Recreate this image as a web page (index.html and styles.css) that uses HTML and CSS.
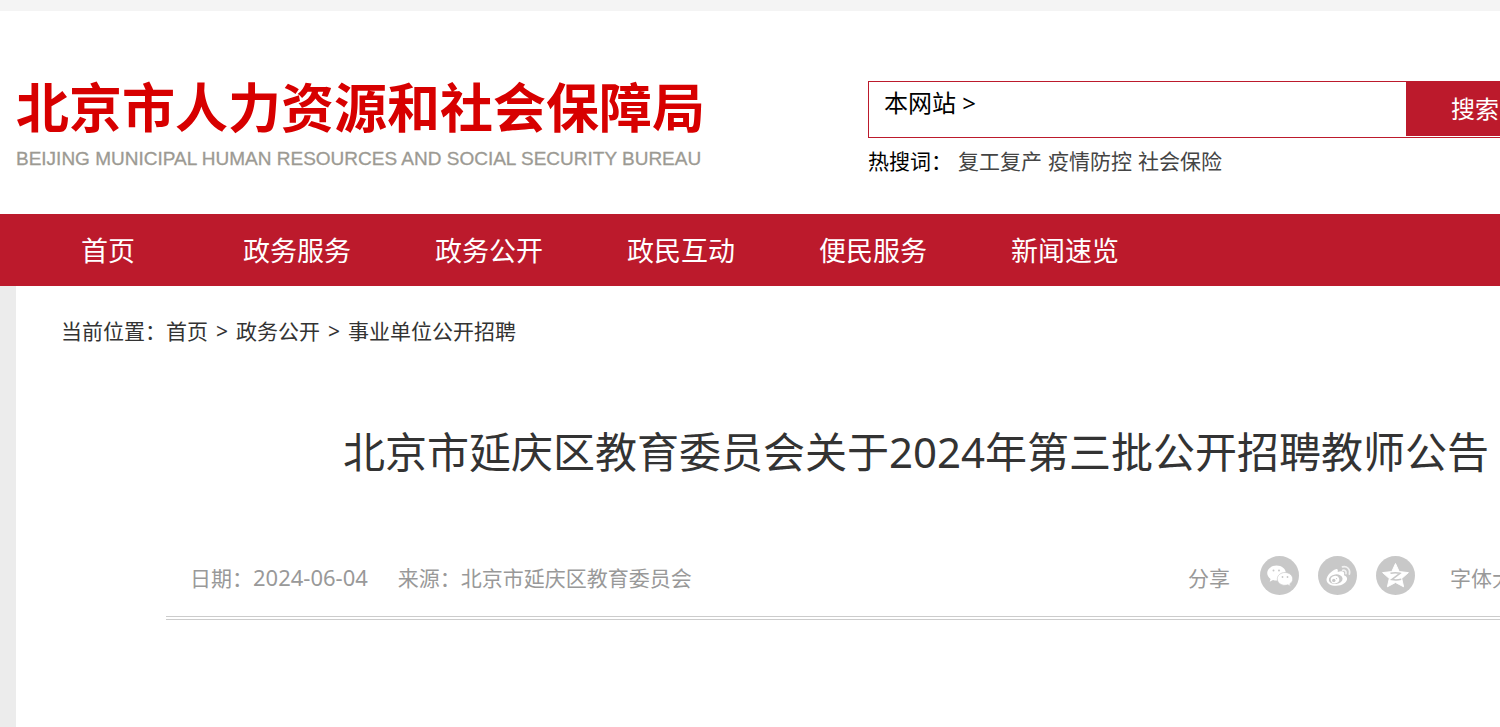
FILE: index.html
```html
<!DOCTYPE html>
<html lang="zh-CN">
<head>
<meta charset="utf-8">
<title>北京市延庆区教育委员会关于2024年第三批公开招聘教师公告</title>
<link rel="stylesheet" href="styles.css">
</head>
<body>
<div class="topbar"></div>
<header class="header">
  <div class="wrap header-row">
    <div class="logo">
      <div class="logo-cn">北京市人力资源和社会保障局</div>
      <div class="logo-en">BEIJING MUNICIPAL HUMAN RESOURCES AND SOCIAL SECURITY BUREAU</div>
    </div>
    <div class="search">
      <form class="search-form">
        <label class="search-scope" for="q">本网站 &gt;</label>
        <input class="search-input" id="q" type="text">
        <button class="search-button" type="button">搜索</button>
      </form>
      <div class="hot">
        <span class="hot-label">热搜词：</span>
        <a href="#">复工复产</a>
        <a href="#">疫情防控</a>
        <a href="#">社会保险</a>
      </div>
    </div>
  </div>
</header>
<nav class="nav">
  <div class="wrap nav-row">
    <a class="nav-home" href="#">首页</a>
    <a href="#">政务服务</a>
    <a href="#">政务公开</a>
    <a href="#">政民互动</a>
    <a href="#">便民服务</a>
    <a href="#">新闻速览</a>
  </div>
</nav>
<main class="wrap main">
  <div class="crumbs">
    <span>当前位置：</span><a href="#">首页</a><span class="sep">&gt;</span><a href="#">政务公开</a><span class="sep">&gt;</span><a href="#">事业单位公开招聘</a>
  </div>
  <article class="article">
    <h1 class="title">北京市延庆区教育委员会关于2024年第三批公开招聘教师公告</h1>
    <div class="meta">
      <span class="date">日期：<time class="date-value">2024-06-04</time></span>
      <span class="source">来源：北京市延庆区教育委员会</span>
      <div class="share">
        <span class="share-label">分享</span>
        <a class="share-link" href="#" aria-label="微信">
          <svg viewBox="0 0 39 39"><circle cx="19.500" cy="19.500" r="19.500" fill="#c8c8c8"/><path fill="#fff" d="M16.500 9.500c-5.300 0-9.300 3.300-9.300 7.500 0 2.400 1.300 4.500 3.400 5.900l-.9 2.800 3.300-1.700c1.100.4 2.300.6 3.500.6 5.200 0 9.300-3.400 9.300-7.600s-4.100-7.500-9.300-7.500z"/><path fill="#fff" stroke="#c8c8c8" stroke-width=".7" d="M25 16.500c-4.300 0-7.700 2.900-7.700 6.400s3.400 6.400 7.700 6.400c1 0 2-.2 2.900-.5l2.700 1.500-.8-2.500c1.800-1.200 2.900-2.900 2.900-4.900 0-3.500-3.400-6.400-7.700-6.400z"/><g fill="#c8c8c8"><circle cx="13.500" cy="14.500" r="1"/><circle cx="19" cy="14.500" r="1"/><circle cx="22.500" cy="21" r=".9"/><circle cx="27.500" cy="21" r=".9"/></g></svg>
        </a>
        <a class="share-link" href="#" aria-label="微博">
          <svg viewBox="0 0 39 39"><circle cx="19.500" cy="19.500" r="19.500" fill="#c8c8c8"/><path fill="#fff" d="M17.800 13.200c-3.600 1-9.300 6.300-9.300 10.500 0 3.700 4.300 6.100 9.600 6.100 6.300 0 11-3.600 11-7 0-2-1.500-3.100-3.200-3.600.5-1.400.4-2.600-.4-3.300-1.200-1.200-3.600-.8-5.800.1.500-1.900-.1-3.300-1.900-2.800z"/><ellipse cx="17.700" cy="23.200" rx="6.900" ry="4.800" fill="#c8c8c8" transform="rotate(-8 17.700 23.200)"/><ellipse cx="17" cy="23.600" rx="4.300" ry="3.700" fill="#fff" transform="rotate(-15 17 23.600)"/><circle cx="15.800" cy="24.400" r="1.700" fill="#c8c8c8"/><circle cx="18.500" cy="22.600" r=".7" fill="#c8c8c8"/><path d="M24.500 10.800c4.600-1.100 8.100 2.500 6.900 7.300M24.700 14.300c2.300-.5 3.800 1 3.300 3.300" fill="none" stroke="#fff" stroke-opacity=".75" stroke-width="1.700" stroke-linecap="round"/></svg>
        </a>
        <a class="share-link" href="#" aria-label="QQ空间">
          <svg viewBox="0 0 39 39"><circle cx="19.500" cy="19.500" r="19.500" fill="#c8c8c8"/><path fill="#fff" stroke="#fff" stroke-linejoin="round" d="M19.500 7.500l3.700 8.100 9.200 1-6.700 5.900 1.900 8.300-8.100-4.300-8.100 4.300 1.900-8.300-6.700-5.900 9.200-1z"/><path d="M14.500 17.300c3.300-.7 6.500-.7 9.500 0l-8.300 6.300c3.300.6 6.500.5 9.500-.3" fill="none" stroke="#c8c8c8" stroke-width="1.500"/></svg>
        </a>
      </div>
      <span class="font-size">字体大小：</span>
    </div>
  </article>
</main>
</body>
</html>
```
FILE: styles.css
```css
* {
  box-sizing: border-box;
}

body {
  display: flex;
  flex-direction: column;
  min-height: 100vh;
  margin: 0;
  overflow: hidden;
  background: #ececec;
  color: #333;
  font: 21px/32px "Noto Sans", "Noto Sans CJK SC", sans-serif;
}

a {
  color: inherit;
  text-decoration: none;
}

.wrap {
  min-width: 1800px;
  margin-left: 16px;
}

.topbar {
  height: 11px;
  background: #f4f4f4;
}

.header {
  background: #fff;
  padding: 66px 0 35px;
}

.header-row {
  display: flex;
}

.logo {
  width: 852px;
  white-space: nowrap;
}

.logo-cn {
  color: #d70000;
  font-size: 53px;
  font-weight: 700;
  line-height: 62px;
}

.logo-en {
  color: #9c9a93;
  font: 19px/40px "Liberation Sans", sans-serif;
  -webkit-text-stroke: 0.3px #9c9a93;
}

.search {
  flex: 1;
  padding-top: 4px;
}

.search-form {
  display: flex;
  width: 680px;
  border: 1px solid #bc1a2c;
  color: #000;
  font-size: 24px;
}

.search-scope {
  padding: 5px 15px 18px;
}

.search-input {
  flex: 1;
  min-width: 0;
  padding: 0;
  border: 0;
  outline: 0;
  font: inherit;
}

.search-button {
  width: 141px;
  height: 54px;
  padding: 0 0 0 45px;
  border: 0;
  background: #bc1a2c;
  color: #fff;
  font: inherit;
  text-align: left;
}

.hot {
  display: flex;
  gap: 6px;
  padding-top: 7px;
  color: #444;
}

.hot-label {
  color: #000;
}

.nav {
  background: #bc1a2c;
  color: #fff;
}

.nav-row {
  display: flex;
  gap: 84px;
  padding: 2px 0 0 65px;
  font-size: 27px;
  line-height: 70px;
}

.nav-home {
  margin-right: 24px;
}

.main {
  flex: 1;
  background: #fff;
  padding: 29px 150px 0;
}

.crumbs {
  margin-left: -105px;
}

.sep {
  padding: 0 8px;
}

.title {
  margin: 73px 0 0;
  font-size: 42px;
  font-weight: 400;
  line-height: 64px;
  text-align: center;
}

.meta {
  display: flex;
  align-items: center;
  gap: 30px;
  margin-top: 72px;
  padding: 0 24px 21px;
  border-bottom: 4px double #ccc;
  color: #999;
}

.date,
.source,
.share-label,
.font-size {
  padding-top: 4px;
}

.date-value {
  font-size: 22px;
}

.share {
  display: flex;
  align-items: center;
  gap: 19px;
  margin-left: auto;
  margin-right: 5px;
}

.share-label {
  margin-right: 11px;
}

.share-link,
.share-link svg {
  display: block;
  width: 39px;
  height: 39px;
}

.font-size {
  width: 192px;
  white-space: nowrap;
}
```
